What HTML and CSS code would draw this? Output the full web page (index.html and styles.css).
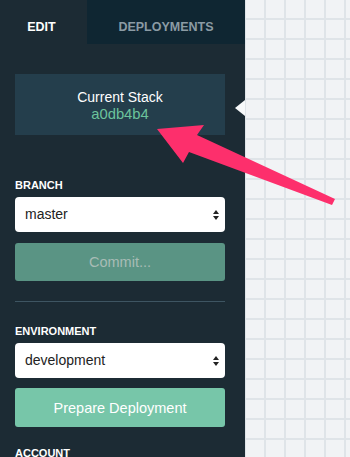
FILE: index.html
```html
<!DOCTYPE html>
<html lang="en">
<head>
  <meta charset="UTF-8">
  <title>Stack Editor</title>
  <meta name="viewport" content="width=device-width, initial-scale=1.0">
  <link rel="stylesheet" href="styles.css">
</head>
<body>

<div class="sidebar">
  <div class="tabs">
    <div class="tab active">EDIT</div>
    <div class="tab">DEPLOYMENTS</div>
  </div>

  <div class="stack">
    <div class="stack-title">Current Stack</div>
    <div class="stack-hash">a0db4b4</div>
  </div>

  <div class="section branch">
    <div class="label">BRANCH</div>
    <div class="select">
      <span>master</span>
      <svg class="caret" width="6" height="10" viewBox="0 0 6 10"><path d="M3 0 L6 4 L0 4 Z M0 6 L6 6 L3 10 Z" fill="#222"/></svg>
    </div>
    <button class="btn btn-commit">Commit...</button>
  </div>

  <div class="divider"></div>

  <div class="section">
    <div class="label">ENVIRONMENT</div>
    <div class="select">
      <span>development</span>
      <svg class="caret" width="6" height="10" viewBox="0 0 6 10"><path d="M3 0 L6 4 L0 4 Z M0 6 L6 6 L3 10 Z" fill="#222"/></svg>
    </div>
    <button class="btn btn-prepare">Prepare Deployment</button>
  </div>

  <div class="section account">
    <div class="label">ACCOUNT</div>
  </div>
</div>

<div class="canvas">
  <div class="pointer"></div>
</div>

<!-- annotation arrow drawn over the screenshot -->
<svg class="annotation" width="350" height="457" viewBox="0 0 350 457">
  <polygon points="157,129 204,125 197,135 335,199 332,205 189,152 183,163" fill="#fd2f6c"/>
</svg>

</body>
</html>
```

FILE: styles.css
```css
* { margin: 0; padding: 0; box-sizing: border-box; font-family: 'Liberation Sans', Arial, sans-serif; }
body, html { height: 100%; overflow: hidden; }
body { display: flex; position: relative; }

.sidebar { width: 245px; flex-shrink: 0; background-color: #1c2b34; color: #fff; }
.tabs { display: flex; height: 44px; }
.tab {
  display: flex;
  align-items: center;
  justify-content: center;
  font-size: 12.5px;
  font-weight: 700;
  padding-top: 10px;
  color: #8b9ba4;
  background-color: #0f2632;
  flex: 1;
}
.tab.active { flex: 0 0 87px; color: #fff; background-color: #1c2b34; padding-right: 4px; }

.stack {
  margin: 30px 20px 0 15px;
  padding: 15px 0 12px;
  background-color: #243e4c;
  text-align: center;
  font-size: 14px;
  line-height: 17px;
}
.stack-hash { color: #6cc39c; font-size: 14.8px; }

.section { padding: 0 20px 0 15px; }
.branch { margin-top: 44px; }
.label { font-size: 11px; line-height: 13px; font-weight: 700; margin-bottom: 5px; }

.select {
  height: 35px;
  background-color: #fff;
  border-radius: 4px;
  display: flex;
  align-items: center;
  justify-content: space-between;
  padding: 0 6px 1px 10px;
  color: #222;
  font-size: 14px;
}
.caret { margin-top: 1px; }

.btn {
  display: block;
  width: 100%;
  border: none;
  border-radius: 3px;
  font-size: 14.5px;
  margin-top: 11px;
}
.btn-commit { height: 38px; background-color: #5a9484; color: #a8bcb6; }
.btn-prepare { height: 39px; margin-top: 10px; background-color: #77c6a9; color: #fff; }

.divider { height: 1px; margin: 20px 20px 0 15px; background-color: #3e5562; }
.divider + .section { margin-top: 23px; }
.account { margin-top: 20px; }

.canvas {
  flex: 1;
  position: relative;
  background-color: #f1f3f5;
  background-image:
    linear-gradient(to right, #dfe4e8 2px, transparent 2px),
    linear-gradient(to bottom, #dfe4e8 2px, transparent 2px);
  background-size: 20px 20px;
  background-position: -1px -2px;
}
.pointer {
  position: absolute;
  left: -10px;
  top: 100px;
  width: 0;
  height: 0;
  border-top: 8px solid transparent;
  border-bottom: 8px solid transparent;
  border-right: 10px solid #f7f9fa;
}

.annotation { position: absolute; top: 0; left: 0; pointer-events: none; }
```
